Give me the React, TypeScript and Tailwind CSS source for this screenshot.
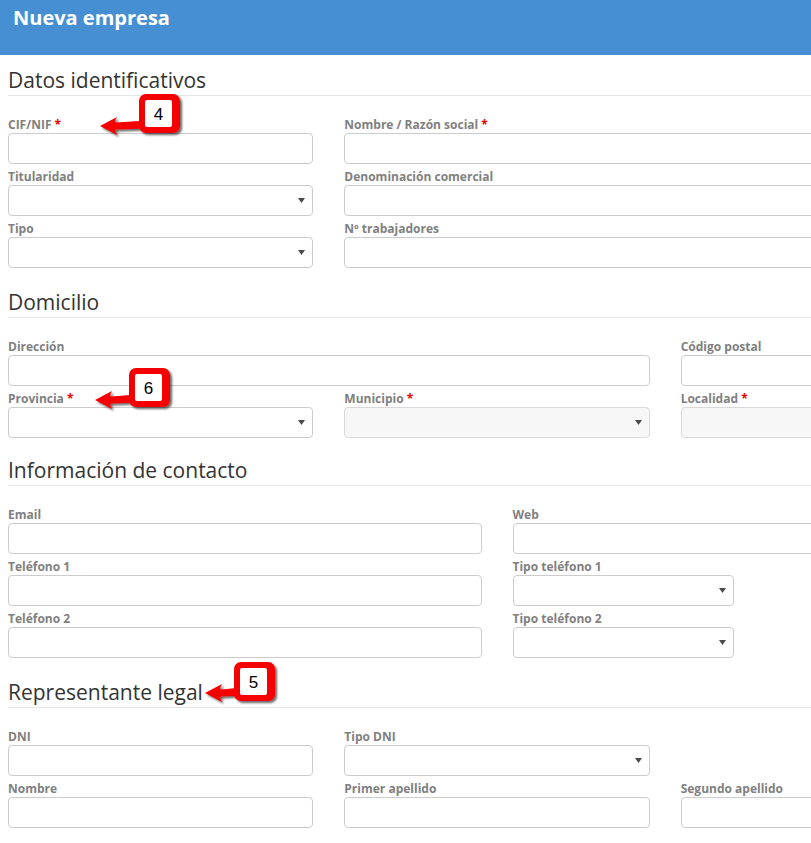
import React from "react";

type FieldProps = {
  label: string;
  req?: boolean;
  span: string;
  select?: boolean;
  disabled?: boolean;
};

function Field({ label, req, span, select, disabled }: FieldProps) {
  return (
    <div className={span}>
      <div className="h-[17px] leading-[17px] text-[12px] font-bold text-[#808080] whitespace-nowrap">
        {label}
        {req && <span className="text-[#e60000]"> *</span>}
      </div>
      <div
        className={
          disabled
            ? "h-[31px] rounded-[4px] border border-[#d9d9d9] bg-[#f7f7f7] flex items-center justify-end pr-[7px]"
            : "h-[31px] rounded-[4px] border border-[#cccccc] bg-white flex items-center justify-end pr-[7px]"
        }
      >
        {select && (
          <svg width="7" height="5" viewBox="0 0 7 5">
            <path d="M0 0H7L3.5 5Z" fill="#4a4a4a" />
          </svg>
        )}
      </div>
    </div>
  );
}

function Heading({ title, mt }: { title: string; mt: string }) {
  return (
    <h2
      className={
        mt +
        " w-[1000px] text-[21px] leading-[26px] pb-[2px] border-b border-[#e5e5e5] text-[#333333] mb-[20px]"
      }
    >
      {title}
    </h2>
  );
}

function Callout({
  id,
  n,
  tipX,
  tipY,
  boxX,
  boxY,
}: {
  id: string;
  n: string;
  tipX: number;
  tipY: number;
  boxX: number;
  boxY: number;
}) {
  const tx = 4;
  const ty = tipY - boxY + 4;
  const bx = boxX - tipX + 4;
  const w = bx + 41 + 8;
  const h = Math.max(39, ty + 10) + 8;
  const d = `M${tx} ${ty} L${tx + 17} ${ty - 9} Q${tx + 14} ${ty - 4} ${tx + 16} ${ty - 3.5} L${bx + 8} ${ty - 5.5} L${bx + 8} ${ty + 2.5} L${tx + 16} ${ty + 3.5} Q${tx + 14} ${ty + 4} ${tx + 17} ${ty + 9} Z`;
  return (
    <svg
      className="absolute"
      style={{ left: tipX - 4, top: boxY - 4 }}
      width={w}
      height={h}
      viewBox={`0 0 ${w} ${h}`}
    >
      <defs>
        <filter id={id} x="-20%" y="-20%" width="150%" height="150%">
          <feDropShadow dx="2" dy="2" stdDeviation="1.2" floodColor="#000" floodOpacity="0.6" />
        </filter>
      </defs>
      <g filter={`url(#${id})`}>
        <path d={d} fill="#f50000" />
        <rect x={bx} y={4} width={41} height={39} rx={7} fill="#f50000" />
      </g>
      <rect x={bx + 6} y={10} width={27} height={27} rx={2} fill="#ffffff" />
      <text
        x={bx + 19.5}
        y={29.5}
        textAnchor="middle"
        fontFamily="'Liberation Sans', Arial, sans-serif"
        fontSize="17"
        fill="#000"
      >
        {n}
      </text>
    </svg>
  );
}

export default function App() {
  return (
    <div
      className="relative w-[811px] h-[843px] overflow-hidden bg-white"
      style={{ fontFamily: "'Open Sans', 'Noto Sans', sans-serif" }}
    >
      <div className="h-[55px] bg-[#478fd3] px-[13px] pt-[4px]">
        <div className="text-[20px] leading-[28px] font-bold text-white">Nueva empresa</div>
      </div>

      <div className="pl-[8px]">
        <Heading title="Datos identificativos" mt="mt-[12px]" />
        <div className="grid grid-cols-12 gap-x-[31px] gap-y-[4px] w-[978px]">
          <Field span="col-span-4" label="CIF/NIF" req />
          <Field span="col-span-8" label="Nombre / Razón social" req />
          <Field span="col-span-4" label="Titularidad" select />
          <Field span="col-span-8" label="Denominación comercial" />
          <Field span="col-span-4" label="Tipo" select />
          <Field span="col-span-8" label="Nº trabajadores" />
        </div>

        <Heading title="Domicilio" mt="mt-[21px]" />
        <div className="grid grid-cols-12 gap-x-[31px] gap-y-[4px] w-[978px]">
          <Field span="col-span-8" label="Dirección" />
          <Field span="col-span-4" label="Código postal" />
          <Field span="col-span-4" label="Provincia" req select />
          <Field span="col-span-4" label="Municipio" req select disabled />
          <Field span="col-span-4" label="Localidad" req disabled />
        </div>

        <Heading title="Información de contacto" mt="mt-[19px]" />
        <div className="grid grid-cols-12 gap-x-[31px] gap-y-[4px] w-[978px]">
          <Field span="col-span-6" label="Email" />
          <Field span="col-span-6" label="Web" />
          <Field span="col-span-6" label="Teléfono 1" />
          <Field span="col-span-3" label="Tipo teléfono 1" select />
          <div className="col-span-3" />
          <Field span="col-span-6" label="Teléfono 2" />
          <Field span="col-span-3" label="Tipo teléfono 2" select />
          <div className="col-span-3" />
        </div>

        <Heading title="Representante legal" mt="mt-[21px]" />
        <div className="grid grid-cols-12 gap-x-[31px] gap-y-[4px] w-[978px]">
          <Field span="col-span-4" label="DNI" />
          <Field span="col-span-4" label="Tipo DNI" select />
          <div className="col-span-4" />
          <Field span="col-span-4" label="Nombre" />
          <Field span="col-span-4" label="Primer apellido" />
          <Field span="col-span-4" label="Segundo apellido" />
        </div>
      </div>

      <Callout id="c4" n="4" tipX={100} tipY={126} boxX={139} boxY={94} />
      <Callout id="c6" n="6" tipX={95} tipY={400} boxX={129} boxY={368} />
      <Callout id="c5" n="5" tipX={205} tipY={693} boxX={234} boxY={662} />
    </div>
  );
}
